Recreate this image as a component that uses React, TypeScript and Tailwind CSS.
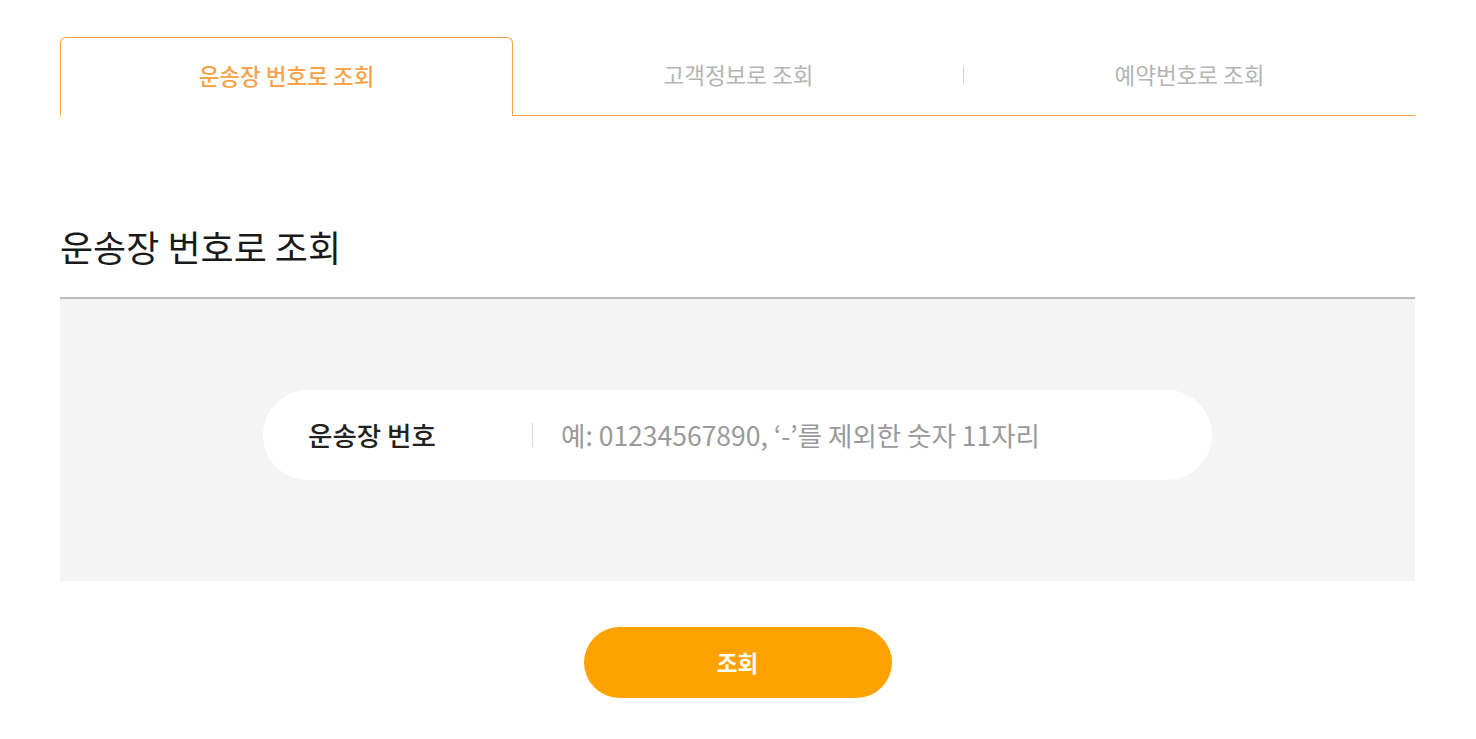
import { useState } from 'react'

const tabs = ['운송장 번호로 조회', '고객정보로 조회', '예약번호로 조회']

export default function App() {
  const [active, setActive] = useState(0)
  const [value, setValue] = useState('')

  return (
    <div
      className="min-h-screen bg-white px-[60px] pt-[37px]"
      style={{ fontFamily: '"Noto Sans CJK KR", "Noto Sans", sans-serif' }}
    >
      {/* 탭 */}
      <div className="flex w-[1355px]">
        {tabs.map((t, i) => {
          const isActive = i === active
          return (
            <button
              key={t}
              onClick={() => setActive(i)}
              className={
                isActive
                  ? 'relative flex h-[79px] flex-1 items-center justify-center rounded-t-[6px] border border-b-0 border-[#f5a64a] bg-white text-[22.5px] font-medium text-[#f7a34a]'
                  : 'relative flex h-[79px] flex-1 items-center justify-center border-b border-[#f5a64a] text-[22.5px] text-[#b4b4b4]'
              }
            >
              {i === 2 && active === 0 && (
                <span className="absolute -left-px top-[29px] h-[18px] w-px bg-[#d5d5d5]" />
              )}
              <span className="-mt-[2px]">{t}</span>
            </button>
          )
        })}
      </div>

      {/* 제목 */}
      <h2 className="mt-[106px] text-[36px] font-normal leading-[48px] text-[#1a1a1a]">
        {tabs[active]}
      </h2>

      {/* 검색 영역 */}
      <div className="mt-[27px] w-[1355px] border-t-2 border-[#bbbbbb] bg-[#f4f4f4] pb-[101px] pt-[91px]">
        <div className="mx-auto flex h-[90px] w-[949px] items-center rounded-full bg-white">
          <label className="w-[269px] shrink-0 pl-[45px] text-[26.5px] font-medium text-[#222]">
            운송장 번호
          </label>
          <span className="h-[24px] w-px shrink-0 bg-[#d8d8d8]" />
          <input
            value={value}
            onChange={(e) => setValue(e.target.value)}
            placeholder="예: 01234567890, ‘-’를 제외한 숫자 11자리"
            className="ml-[28px] flex-1 bg-transparent pr-10 text-[26.5px] text-[#333] outline-none placeholder:text-[#999]"
          />
        </div>
      </div>

      {/* 버튼 */}
      <div className="flex w-[1355px] justify-center pt-[46px]">
        <button className="h-[71px] w-[308px] rounded-full bg-[#ffa200] text-[22.5px] font-bold text-white">
          조회
        </button>
      </div>
    </div>
  )
}
